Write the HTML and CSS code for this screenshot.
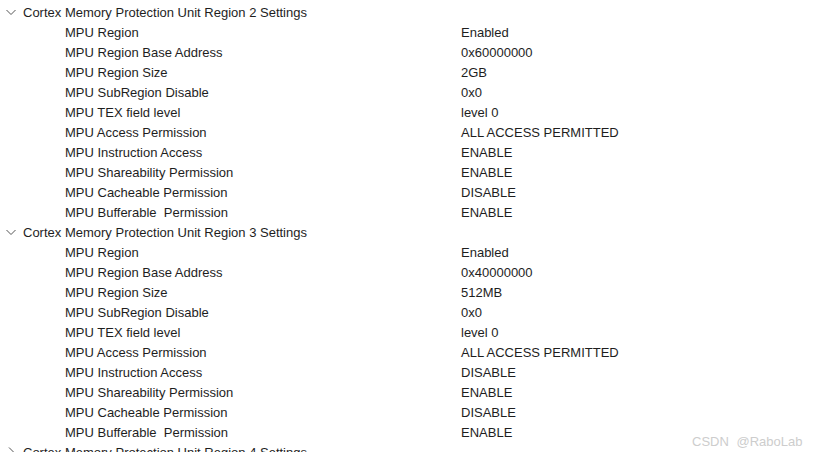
FILE: index.html
```html
<!DOCTYPE html>
<html>
<head>
<meta charset="utf-8">
<link rel="stylesheet" href="styles.css">
</head>
<body>
<div class="tree">
  <div class="group">
    <div class="head"><svg class="chev" width="12" height="12" viewBox="0 0 12 12"><path d="M1.5 4 L6 8.5 L10.5 4" fill="none" stroke="#555" stroke-width="1"/></svg><span>Cortex Memory Protection Unit Region 2 Settings</span></div>
    <div class="row"><span class="k">MPU Region</span><span class="v">Enabled</span></div>
    <div class="row"><span class="k">MPU Region Base Address</span><span class="v">0x60000000</span></div>
    <div class="row"><span class="k">MPU Region Size</span><span class="v">2GB</span></div>
    <div class="row"><span class="k">MPU SubRegion Disable</span><span class="v">0x0</span></div>
    <div class="row"><span class="k">MPU TEX field level</span><span class="v">level 0</span></div>
    <div class="row"><span class="k">MPU Access Permission</span><span class="v">ALL ACCESS PERMITTED</span></div>
    <div class="row"><span class="k">MPU Instruction Access</span><span class="v">ENABLE</span></div>
    <div class="row"><span class="k">MPU Shareability Permission</span><span class="v">ENABLE</span></div>
    <div class="row"><span class="k">MPU Cacheable Permission</span><span class="v">DISABLE</span></div>
    <div class="row"><span class="k">MPU Bufferable &nbsp;Permission</span><span class="v">ENABLE</span></div>
  </div>
  <div class="group">
    <div class="head"><svg class="chev" width="12" height="12" viewBox="0 0 12 12"><path d="M1.5 4 L6 8.5 L10.5 4" fill="none" stroke="#555" stroke-width="1"/></svg><span>Cortex Memory Protection Unit Region 3 Settings</span></div>
    <div class="row"><span class="k">MPU Region</span><span class="v">Enabled</span></div>
    <div class="row"><span class="k">MPU Region Base Address</span><span class="v">0x40000000</span></div>
    <div class="row"><span class="k">MPU Region Size</span><span class="v">512MB</span></div>
    <div class="row"><span class="k">MPU SubRegion Disable</span><span class="v">0x0</span></div>
    <div class="row"><span class="k">MPU TEX field level</span><span class="v">level 0</span></div>
    <div class="row"><span class="k">MPU Access Permission</span><span class="v">ALL ACCESS PERMITTED</span></div>
    <div class="row"><span class="k">MPU Instruction Access</span><span class="v">DISABLE</span></div>
    <div class="row"><span class="k">MPU Shareability Permission</span><span class="v">ENABLE</span></div>
    <div class="row"><span class="k">MPU Cacheable Permission</span><span class="v">DISABLE</span></div>
    <div class="row"><span class="k">MPU Bufferable &nbsp;Permission</span><span class="v">ENABLE</span></div>
  </div>
  <div class="group">
    <div class="head"><svg class="chev" width="12" height="12" viewBox="0 0 12 12"><path d="M4 1.5 L8.5 6 L4 10.5" fill="none" stroke="#555" stroke-width="1"/></svg><span>Cortex Memory Protection Unit Region 4 Settings</span></div>
  </div>
</div>
<div class="mark">CSDN @RaboLab</div>
</body>
</html>
```
FILE: styles.css
```css
html, body {
  margin: 0;
  padding: 0;
  background: #fff;
  overflow: hidden;
  height: 452px;
}
body {
  font-family: "Liberation Sans", Arial, sans-serif;
  font-size: 13px;
  color: #1e1e1e;
}
.tree {
  padding-top: 2px;
}
.head {
  height: 20px;
  display: flex;
  align-items: center;
  padding-left: 5px;
}
.chev {
  margin-right: 6px;
  flex: none;
}
.row {
  height: 20px;
  display: flex;
  align-items: center;
  padding-left: 65px;
}
.k {
  width: 396px;
  flex: none;
  white-space: pre;
}
.v {
  white-space: nowrap;
}
.mark {
  position: absolute;
  left: 692px;
  top: 434px;
  font-size: 13px;
  color: #cdcdcd;
  word-spacing: 4px;
  white-space: nowrap;
}
```
